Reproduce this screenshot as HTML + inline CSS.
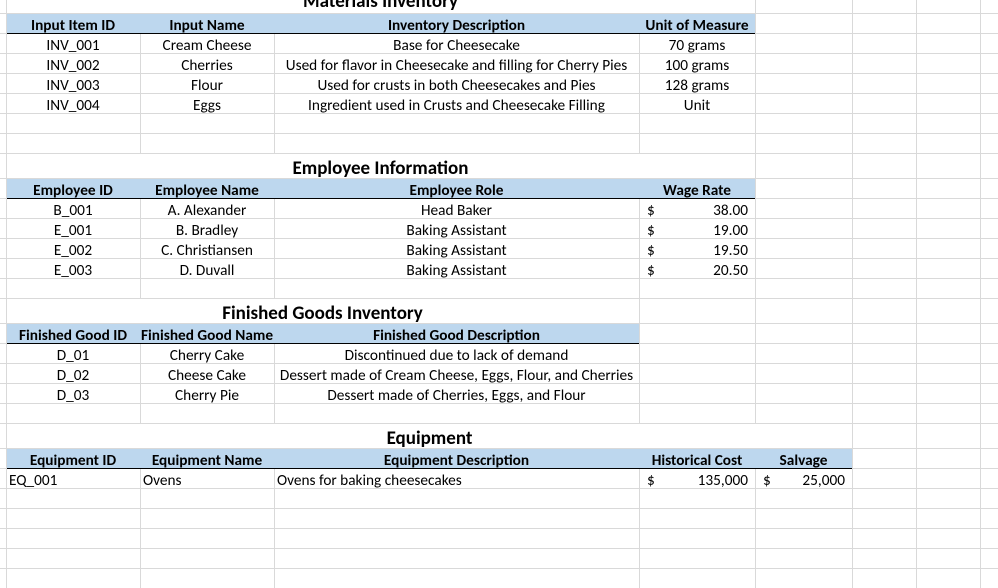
<!DOCTYPE html>
<html><head><meta charset="utf-8"><style>
body{margin:0;width:998px;height:588px;overflow:hidden;background:#fff;position:relative;font-family:"Calibri","Carlito","Liberation Sans",sans-serif;font-size:15.3px;color:#000}
.h{position:absolute;left:0;width:998px;height:1px;background:#d9d9d9}
.v{position:absolute;top:0;height:588px;width:1px;background:#d9d9d9}
.w{position:absolute;background:#fff}
.b{position:absolute;background:#bdd7ee;border-bottom:1px solid #000;height:19px}
.t{position:absolute;height:20px;line-height:25px;white-space:nowrap;text-align:center}
.bo{font-weight:bold}
.ti{position:absolute;font-weight:bold;font-size:19px;text-align:center;height:25px;line-height:30px;white-space:nowrap}
.l{text-align:left}.r{text-align:right}
</style></head><body>
<div class="h" style="top:13px"></div><div class="h" style="top:33px"></div><div class="h" style="top:53px"></div><div class="h" style="top:73px"></div><div class="h" style="top:93px"></div><div class="h" style="top:113px"></div><div class="h" style="top:133px"></div><div class="h" style="top:153px"></div><div class="h" style="top:178px"></div><div class="h" style="top:198px"></div><div class="h" style="top:218px"></div><div class="h" style="top:238px"></div><div class="h" style="top:258px"></div><div class="h" style="top:278px"></div><div class="h" style="top:298px"></div><div class="h" style="top:323px"></div><div class="h" style="top:343px"></div><div class="h" style="top:363px"></div><div class="h" style="top:383px"></div><div class="h" style="top:403px"></div><div class="h" style="top:423px"></div><div class="h" style="top:448px"></div><div class="h" style="top:468px"></div><div class="h" style="top:488px"></div><div class="h" style="top:508px"></div><div class="h" style="top:528px"></div><div class="h" style="top:548px"></div><div class="h" style="top:568px"></div>
<div class="v" style="left:6px"></div><div class="v" style="left:140px"></div><div class="v" style="left:274px"></div><div class="v" style="left:639px"></div><div class="v" style="left:755px"></div><div class="v" style="left:852px"></div><div class="v" style="left:916px"></div><div class="v" style="left:980px"></div>
<div class="w" style="left:7px;top:0;width:748px;height:13px"></div>
<div class="w" style="left:7px;top:154px;width:748px;height:24px"></div>
<div class="w" style="left:7px;top:299px;width:632px;height:24px"></div>
<div class="w" style="left:7px;top:424px;width:845px;height:24px"></div>
<div class="b" style="left:7px;top:14px;width:748px"></div>
<div class="b" style="left:7px;top:179px;width:748px"></div>
<div class="b" style="left:7px;top:324px;width:632px"></div>
<div class="b" style="left:7px;top:449px;width:845px"></div>

<div class="ti" style="left:6px;top:-13px;width:749px">Materials Inventory</div>
<div class="t bo" style="left:6px;top:13px;width:134px">Input Item ID</div>
<div class="t bo" style="left:140px;top:13px;width:134px">Input Name</div>
<div class="t bo" style="left:274px;top:13px;width:365px">Inventory Description</div>
<div class="t bo" style="left:639px;top:13px;width:116px">Unit of Measure</div>
<div class="t" style="left:6px;top:33px;width:134px">INV_001</div><div class="t" style="left:140px;top:33px;width:134px">Cream Cheese</div><div class="t" style="left:274px;top:33px;width:365px">Base for Cheesecake</div><div class="t" style="left:639px;top:33px;width:116px">70 grams</div>
<div class="t" style="left:6px;top:53px;width:134px">INV_002</div><div class="t" style="left:140px;top:53px;width:134px">Cherries</div><div class="t" style="left:274px;top:53px;width:365px">Used for flavor in Cheesecake and filling for Cherry Pies</div><div class="t" style="left:639px;top:53px;width:116px">100 grams</div>
<div class="t" style="left:6px;top:73px;width:134px">INV_003</div><div class="t" style="left:140px;top:73px;width:134px">Flour</div><div class="t" style="left:274px;top:73px;width:365px">Used for crusts in both Cheesecakes and Pies</div><div class="t" style="left:639px;top:73px;width:116px">128 grams</div>
<div class="t" style="left:6px;top:93px;width:134px">INV_004</div><div class="t" style="left:140px;top:93px;width:134px">Eggs</div><div class="t" style="left:274px;top:93px;width:365px">Ingredient used in Crusts and Cheesecake Filling</div><div class="t" style="left:639px;top:93px;width:116px">Unit</div>

<div class="ti" style="left:6px;top:154px;width:749px">Employee Information</div>
<div class="t bo" style="left:6px;top:178px;width:134px">Employee ID</div>
<div class="t bo" style="left:140px;top:178px;width:134px">Employee Name</div>
<div class="t bo" style="left:274px;top:178px;width:365px">Employee Role</div>
<div class="t bo" style="left:639px;top:178px;width:116px">Wage Rate</div>
<div class="t" style="left:6px;top:198px;width:134px">B_001</div><div class="t" style="left:140px;top:198px;width:134px">A. Alexander</div><div class="t" style="left:274px;top:198px;width:365px">Head Baker</div><div class="t l" style="left:647px;top:198px">$</div><div class="t r" style="left:639px;top:198px;width:109px">38.00</div>
<div class="t" style="left:6px;top:218px;width:134px">E_001</div><div class="t" style="left:140px;top:218px;width:134px">B. Bradley</div><div class="t" style="left:274px;top:218px;width:365px">Baking Assistant</div><div class="t l" style="left:647px;top:218px">$</div><div class="t r" style="left:639px;top:218px;width:109px">19.00</div>
<div class="t" style="left:6px;top:238px;width:134px">E_002</div><div class="t" style="left:140px;top:238px;width:134px">C. Christiansen</div><div class="t" style="left:274px;top:238px;width:365px">Baking Assistant</div><div class="t l" style="left:647px;top:238px">$</div><div class="t r" style="left:639px;top:238px;width:109px">19.50</div>
<div class="t" style="left:6px;top:258px;width:134px">E_003</div><div class="t" style="left:140px;top:258px;width:134px">D. Duvall</div><div class="t" style="left:274px;top:258px;width:365px">Baking Assistant</div><div class="t l" style="left:647px;top:258px">$</div><div class="t r" style="left:639px;top:258px;width:109px">20.50</div>

<div class="ti" style="left:6px;top:299px;width:633px">Finished Goods Inventory</div>
<div class="t bo" style="left:6px;top:323px;width:134px">Finished Good ID</div>
<div class="t bo" style="left:140px;top:323px;width:134px">Finished Good Name</div>
<div class="t bo" style="left:274px;top:323px;width:365px">Finished Good Description</div>
<div class="t" style="left:6px;top:343px;width:134px">D_01</div><div class="t" style="left:140px;top:343px;width:134px">Cherry Cake</div><div class="t" style="left:274px;top:343px;width:365px">Discontinued due to lack of demand</div>
<div class="t" style="left:6px;top:363px;width:134px">D_02</div><div class="t" style="left:140px;top:363px;width:134px">Cheese Cake</div><div class="t" style="left:274px;top:363px;width:365px">Dessert made of Cream Cheese, Eggs, Flour, and Cherries</div>
<div class="t" style="left:6px;top:383px;width:134px">D_03</div><div class="t" style="left:140px;top:383px;width:134px">Cherry Pie</div><div class="t" style="left:274px;top:383px;width:365px">Dessert made of Cherries, Eggs, and Flour</div>

<div class="ti" style="left:6px;top:424px;width:847px">Equipment</div>
<div class="t bo" style="left:6px;top:448px;width:134px">Equipment ID</div>
<div class="t bo" style="left:140px;top:448px;width:134px">Equipment Name</div>
<div class="t bo" style="left:274px;top:448px;width:365px">Equipment Description</div>
<div class="t bo" style="left:639px;top:448px;width:116px">Historical Cost</div>
<div class="t bo" style="left:755px;top:448px;width:97px">Salvage</div>
<div class="t l" style="left:9px;top:468px">EQ_001</div><div class="t l" style="left:143px;top:468px">Ovens</div><div class="t l" style="left:277px;top:468px">Ovens for baking cheesecakes</div>
<div class="t l" style="left:647px;top:468px">$</div><div class="t r" style="left:639px;top:468px;width:109px">135,000</div>
<div class="t l" style="left:763px;top:468px">$</div><div class="t r" style="left:755px;top:468px;width:90px">25,000</div>
</body></html>
